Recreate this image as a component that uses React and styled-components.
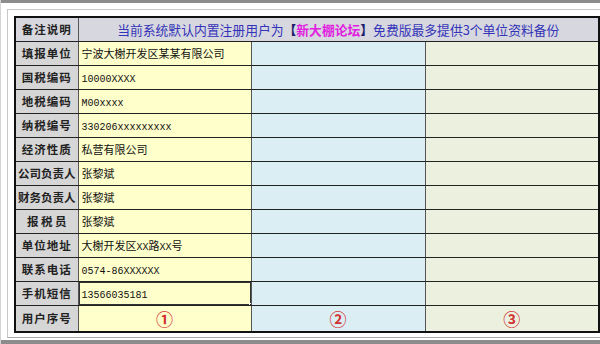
import styled, { createGlobalStyle, css } from "styled-components";

const GlobalStyle = createGlobalStyle`
  html, body {
    margin: 0;
    padding: 0;
    background: #ffffff;
    overflow: hidden;
  }
  body {
    font-family: "Noto Sans CJK SC", "Liberation Sans", sans-serif;
  }
`;

const Page = styled.div`
  width: 600px;
  height: 344px;
  display: flex;
  flex-direction: column;
  box-sizing: border-box;
  border-left: 1px solid #d4d4d4;
`;

const Band = styled.div`
  flex: none;
  height: ${(p) => p.$h}px;
  background: #8c8c8c;
  ${(p) =>
    p.$bottom &&
    css`
      margin-top: auto;
    `}
`;

const Frame = styled.div`
  margin: 6px 0 0 6px;
  padding: 6px 0 4px 6px;
  border-top: 1px solid #c8c8c8;
  border-left: 1px solid #c8c8c8;
  border-bottom: 1px solid #a8a8a8;
`;

const Sheet = styled.table`
  width: 584px;
  table-layout: fixed;
  border-collapse: collapse;
  border: 2px solid #111;
`;

const Row = styled.tr`
  height: 24px;
`;

const fills = {
  head: "#d7d7df",
  label: "#d6d6d6",
  a: "#ffffcc",
  b: "#dbeef4",
  c: "#ebf1de",
};

const Cell = styled.td`
  padding: 0 0 0 3px;
  background: ${(p) => fills[p.$fill]};
  border-top: 1px solid #222;
  border-bottom: 1px solid #222;
  border-left: 1px solid #555;
  border-right: 1px solid #555;
  font-size: 11px;
  color: #111;
  white-space: nowrap;
  overflow: hidden;
  vertical-align: middle;
  position: relative;
  font-family: "Noto Sans CJK SC", sans-serif;
`;

const Ascii = styled.span`
  font-family: "Liberation Mono", monospace;
  font-size: 10px;
`;

const Label = styled(Cell).attrs({ as: "th" })`
  padding: 0;
  text-align: center;
  font-weight: 700;
  font-size: 11.5px;
  letter-spacing: ${(p) => (p.$spread ? "1px" : "0")};
  color: #222;
`;

const Notice = styled(Cell)`
  padding: 0;
  text-align: center;
  font-size: 12.8px;
  color: #3434b8;
`;

const Mark = styled.span`
  color: #1c1c6c;
  font-weight: 700;
`;

const Brand = styled.span`
  color: #e01fe0;
  font-weight: 700;
`;

const Selected = styled(Cell)`
  &::after {
    content: "";
    position: absolute;
    inset: -1px;
    border: 2px solid #333;
    pointer-events: none;
  }
  &::before {
    content: "";
    position: absolute;
    right: -4px;
    bottom: -4px;
    width: 4px;
    height: 4px;
    background: #222;
    border: 1px solid #fff;
    z-index: 2;
  }
`;

const Serial = styled(Cell)`
  padding: 0;
  text-align: center;
  font-size: 17px;
  font-weight: 700;
  color: #d23434;
`;

const rows = [
  ["填报单位", "宁波大榭开发区某某有限公司"],
  ["国税编码", "10000XXXX"],
  ["地税编码", "M00xxxx"],
  ["纳税编号", "330206xxxxxxxxx"],
  ["经济性质", "私营有限公司"],
  ["公司负责人", "张黎斌"],
  ["财务负责人", "张黎斌"],
  ["报 税 员", "张黎斌"],
  ["单位地址", "大榭开发区XX路XX号"],
  ["联系电话", "0574-86XXXXXX"],
  ["手机短信", "13566035181", true],
];

// split text into runs so latin characters get the narrow half-width face
function Value({ text }) {
  const parts = text.match(/[\x20-\x7e]+|[^\x20-\x7e]+/g) || [];
  return parts.map((part, i) =>
    /^[\x20-\x7e]/.test(part) ? <Ascii key={i}>{part}</Ascii> : part
  );
}

export default function App() {
  return (
    <>
      <GlobalStyle />
      <Page>
        <Band $h={3} />
        <Frame>
          <Sheet>
            <colgroup>
              <col style={{ width: 63 }} />
              <col style={{ width: 173 }} />
              <col style={{ width: 174 }} />
              <col style={{ width: 174 }} />
            </colgroup>
            <tbody>
              <Row>
                <Label $fill="head" $spread>
                  备注说明
                </Label>
                <Notice $fill="head" colSpan={3}>
                  当前系统默认内置注册用户为<Mark>【</Mark>
                  <Brand>新大棚论坛</Brand>
                  <Mark>】</Mark>免费版最多提供3个单位资料备份
                </Notice>
              </Row>
              {rows.map(([label, value, selected]) => {
                const ValueCell = selected ? Selected : Cell;
                return (
                  <Row key={label}>
                    <Label $fill="label" $spread={label.length === 4}>
                      {label}
                    </Label>
                    <ValueCell $fill="a">
                      <Value text={value} />
                    </ValueCell>
                    <Cell $fill="b" />
                    <Cell $fill="c" />
                  </Row>
                );
              })}
              <Row>
                <Label $fill="label" $spread>
                  用户序号
                </Label>
                <Serial $fill="a">①</Serial>
                <Serial $fill="b">②</Serial>
                <Serial $fill="c">③</Serial>
              </Row>
            </tbody>
          </Sheet>
        </Frame>
        <Band $h={4} $bottom />
      </Page>
    </>
  );
}
